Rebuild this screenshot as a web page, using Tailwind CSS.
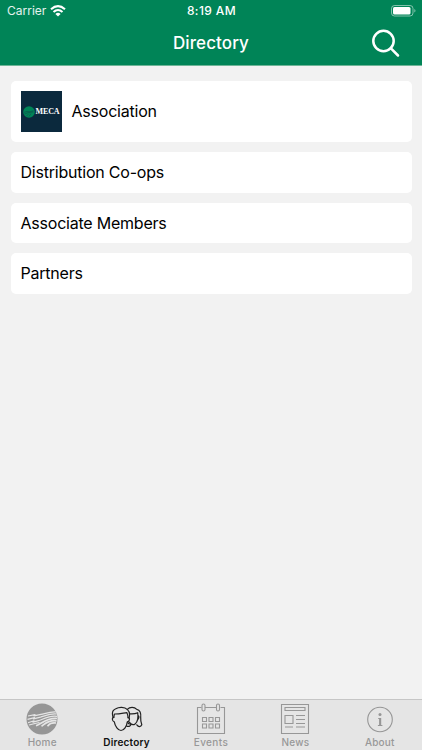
<!DOCTYPE html>
<html lang="en">
<head>
<meta charset="utf-8">
<title>Directory</title>
<script src="https://cdn.jsdelivr.net/npm/@tailwindcss/browser@4"></script>
</head>
<body class="h-[750px] w-[422px] overflow-hidden bg-[#f2f2f2] font-['Inter',sans-serif] text-black">
<div class="flex h-full flex-col">
  <header class="h-[66px] shrink-0 border-b border-[#6eb597] bg-[#008457] text-white">
    <div class="grid h-[22px] grid-cols-3 items-center pl-[7px] pr-[6px]">
      <div class="flex items-center gap-[4px]">
        <span class="text-[12px] leading-[22px] tracking-[0px] text-white/90">Carrier</span>
        <svg class="h-[12px] w-[16px]" viewBox="0 0 16 12" fill="none" stroke="#fff" stroke-width="2.1">
          <path d="M1 4.3Q8-1.9 15 4.3"/><path d="M3.5 7Q8 3 12.500 7"/><path d="M8 11.500L5.400 8.900Q8 6.800 10.600 8.900Z" fill="#fff" stroke="none"/>
        </svg>
      </div>
      <span class="text-center text-[12px] font-medium leading-[22px] tracking-[0.4px]">8:19 AM</span>
      <svg class="h-[12px] w-[25px] justify-self-end" viewBox="0 0 25 12">
        <rect x=".5" y=".5" width="21.500" height="10.500" rx="3" fill="none" stroke="#fff" stroke-opacity=".5"/>
        <rect x="2" y="2" width="17.500" height="7.500" rx="1.500" fill="#fff"/><path d="M23.300 4v3.600q1.200-.5 1.200-1.800T23.300 4Z" fill="#fff" fill-opacity=".5"/>
      </svg>
    </div>
    <div class="grid h-[43px] grid-cols-[1fr_auto_1fr] items-center">
      <span></span>
      <h1 class="text-[17px] font-medium tracking-[0.1px]">Directory</h1>
      <svg class="mr-[21px] h-[30px] w-[30px] justify-self-end" viewBox="0 0 30 30" fill="none" stroke="#fff" stroke-width="2.500">
        <circle cx="12.500" cy="12" r="10.200"/><path d="M19.700 19.200l7.300 7.300" stroke-linecap="round"/>
      </svg>
    </div>
  </header>

  <main class="flex flex-1 flex-col gap-[10px] px-[10.500px] pt-[15px] text-[16px] tracking-[-0.220px]">
    <div class="flex h-[61px] items-center gap-[10px] rounded-[5px] bg-white px-[10px]">
      <div class="flex h-[41px] w-[41px] items-center bg-[#0b293d] pl-[2px]">
        <svg class="h-[12px] w-[12px] shrink-0" viewBox="0 0 12 12"><circle cx="6" cy="6" r="5.800" fill="#008457"/><path d="M1 6.300l3-.8 3 .3 3.500-1M1.500 8l4-1.500L10.500 6M3.500 10l2.500-2.500M6 10.500l2-3" fill="none" stroke="#0b4c48" stroke-width=".6"/></svg>
        <span class="ml-[1px] font-['Liberation_Serif',serif] text-[8px] font-bold leading-none tracking-[-0.1px] text-white">MECA</span>
      </div>
      <span class="-mt-[2px]">Association</span>
    </div>
    <div class="flex h-[40.500px] items-center rounded-[5px] bg-white px-[10px]">Distribution Co-ops</div>
    <div class="flex h-[40.500px] items-center rounded-[5px] bg-white px-[10px]">Associate Members</div>
    <div class="flex h-[40.500px] items-center rounded-[5px] bg-white px-[10px]">Partners</div>
  </main>

  <nav class="grid h-[51px] shrink-0 grid-cols-5 border-t border-[#c6c6c6] bg-[#e5e5e5] text-[10px] font-medium leading-[14px] tracking-[0.2px] text-[#989898]">
    <div class="flex flex-col items-center pt-[3px]">
      <svg class="h-[32px] w-[32px]" viewBox="0 0 32 32" fill="none">
        <circle cx="16" cy="16" r="15.500" fill="#969696"/>
        <g stroke="#e5e5e5" stroke-width="1.200" stroke-linejoin="round">
          <path d="M2 13l7-1.300-1 1.200 7-1.500C20 10.300 24 8.700 29.800 9"/>
          <path d="M1.500 16.300l7-1.700-1 1.300 7-1.800C20 12.500 25 10.300 30.500 11"/>
          <path d="M2 19.700l6-1.900-1 1.400 6.500-1.900C19 15.200 25 12 31 13.300"/>
          <path d="M3 22l6-1.500 4.500-1"/>
        </g>
        <g stroke="#e5e5e5" stroke-width="1.700">
          <path d="M10 22.800C16 20.500 21 14.500 31 15.500"/><path d="M15.500 23.200C19 21 22 16.800 30.500 17.800"/><path d="M21.500 23.200C23.500 21 25 19.500 30 20"/>
        </g>
      </svg>
      <span>Home</span>
    </div>
    <div class="flex flex-col items-center pt-[3px] text-[#111]">
      <svg class="h-[32px] w-[32px]" viewBox="0 0 32 32" fill="none" stroke="#222" stroke-width="1.200" stroke-linejoin="round" stroke-linecap="round">
        <path d="M2.300 14.800C.7 10.500 1.700 7 4.800 5.800 8 3.800 13.500 3.700 16.500 6.600c2.200 2 2.400 5.400 1.500 8.400"/>
        <path d="M2.800 14.300l.6-3.300c4.500.2 9-1 12.500-1.400 .6 1.500 1.100 3.200 1.200 5"/>
        <path d="M2.800 14.300c-2-.4-1.900 3.900.5 4.500C4.200 23.500 7 27.500 10 27.500s5.800-4.300 6.300-8.600c2.400-.5 3-4.400.8-4.300"/>
        <path d="M16.300 6.300c2.500-2.500 7-2.500 9.500 0 3.200.3 4.400 4 3.900 8.200-.2 3.500.4 5.500 1.100 7.300-1 2.500-3.500 2.200-5 0"/>
        <path d="M18.700 10.800c3.200.3 5.800 0 8-1.100.7 5 .3 9-2.600 11.200-1.700 1.300-4 .6-5.800-1.700M27.200 12.500c1.300.5.700 3-.5 4"/>
        <path d="M16.800 19.300c.2 1 1.900 1.700 3.100 1.700.2 1.900-2.100 3.100-4.400 2"/>
      </svg>
      <span class="font-semibold">Directory</span>
    </div>
    <div class="flex flex-col items-center pt-[3px]">
      <svg class="h-[32px] w-[32px]" viewBox="0 0 32 32" fill="none" stroke="#979797" stroke-width="1.100">
        <path d="M6.500 4.500H2.500v26h27v-26h-4M10 4.500h12"/><rect x="7" y="1" width="3" height="7" rx="1.500"/><rect x="21.500" y="1" width="3" height="7" rx="1.500"/>
        <path d="M7.500 14.500h4v4h-4zM14 14.500h4v4h-4zM20.500 14.500h4v4h-4zM7.500 21h4v4h-4zM14 21h4v4h-4zM20.500 21h4v4h-4z"/>
      </svg>
      <span class="tracking-[0.4px]">Events</span>
    </div>
    <div class="flex flex-col items-center pt-[3px]">
      <svg class="h-[32px] w-[32px]" viewBox="0 0 32 32" fill="none" stroke="#979797" stroke-width="1.100">
        <path d="M2.500 1.500h27v29h-27zM6 4.500h20v3H6zM6 12.500h8v8H6zM17 12.500h9M17 16.500h9M17 20.500h9M6 24h8M17 24h9"/>
      </svg>
      <span>News</span>
    </div>
    <div class="flex flex-col items-center pt-[3px]">
      <svg class="h-[32px] w-[32px]" viewBox="0 0 32 32" fill="none">
        <circle cx="16" cy="16.500" r="12.300" stroke="#969696" stroke-width="1.100"/>
        <circle cx="16" cy="11.500" r="1.500" fill="#969696"/><path d="M14.200 15h3v7h1.200v.9h-4.500V22h1.200v-6.100h-.9z" fill="#969696"/>
      </svg>
      <span>About</span>
    </div>
  </nav>
</div>
</body>
</html>
